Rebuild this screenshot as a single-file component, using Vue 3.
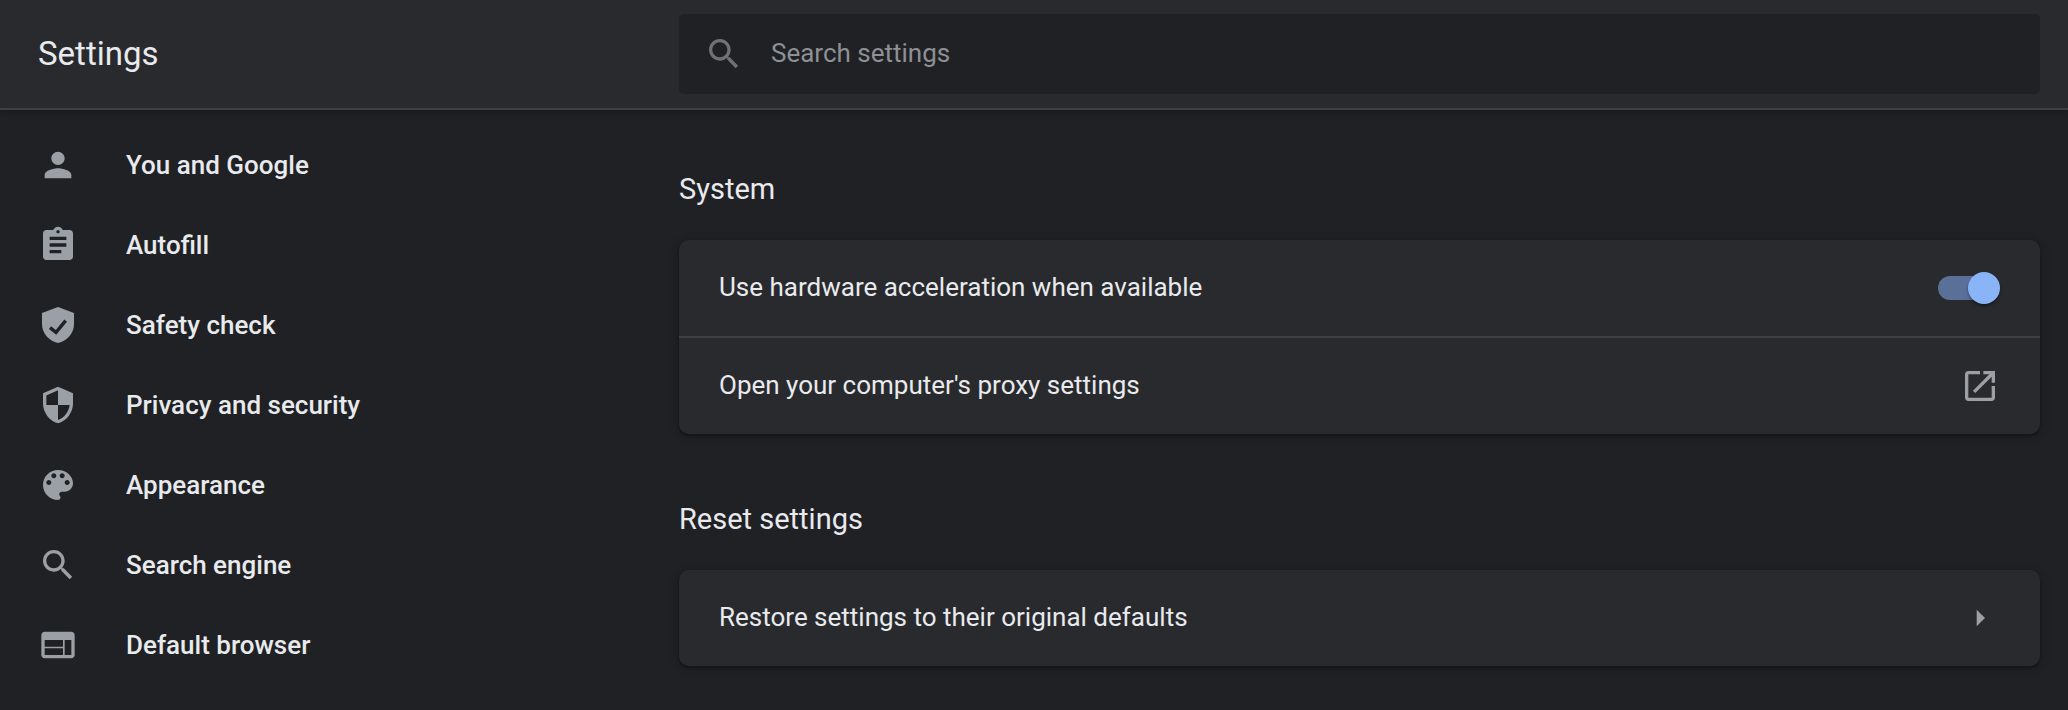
<script setup>
const search = 'M15.5 14h-.79l-.28-.27C15.41 12.59 16 11.11 16 9.5 16 5.91 13.09 3 9.5 3S3 5.91 3 9.5 5.91 16 9.5 16c1.61 0 3.09-.59 4.23-1.57l.27.28v.79l5 4.99L20.49 19l-4.99-5zm-6 0C7.01 14 5 11.99 5 9.5S7.01 5 9.5 5 14 7.01 14 9.5 11.99 14 9.5 14z'
const nav = [
  { label: 'You and Google', d: 'M12 12c2.21 0 4-1.79 4-4s-1.79-4-4-4-4 1.79-4 4 1.79 4 4 4zm0 2c-2.67 0-8 1.34-8 4v2h16v-2c0-2.66-5.33-4-8-4z' },
  { label: 'Autofill', d: 'M19 3h-4.18C14.4 1.84 13.3 1 12 1c-1.3 0-2.4.84-2.82 2H5c-1.1 0-2 .9-2 2v14c0 1.1.9 2 2 2h14c1.1 0 2-.9 2-2V5c0-1.1-.9-2-2-2zm-7 0c.55 0 1 .45 1 1s-.45 1-1 1-1-.45-1-1 .45-1 1-1zm2 14H7v-2h7v2zm3-4H7v-2h10v2zm0-4H7V7h10v2z' },
  { label: 'Safety check', d: 'M12 1.2 2.4 4.8v6.6c0 5.6 4.1 10.2 9.6 11.4 5.5-1.2 9.6-5.8 9.6-11.4V4.8L12 1.2z', check: true },
  { label: 'Privacy and security', d: 'M12 1L3 5v6c0 5.55 3.84 10.74 9 12 5.16-1.26 9-6.45 9-12V5l-9-4zm0 10.99h7c-.53 4.12-3.28 7.79-7 8.94V12H5V6.3l7-3.11v8.8z' },
  { label: 'Appearance', d: 'M12 3c-4.97 0-9 4.03-9 9s4.03 9 9 9c.83 0 1.5-.67 1.5-1.5 0-.39-.15-.74-.39-1.01-.23-.26-.38-.61-.38-.99 0-.83.67-1.5 1.5-1.5H16c2.76 0 5-2.24 5-5 0-4.42-4.03-8-9-8zm-5.5 9c-.83 0-1.5-.67-1.5-1.5S5.67 9 6.5 9 8 9.67 8 10.5 7.33 12 6.5 12zm3-4C8.67 8 8 7.33 8 6.5S8.67 5 9.5 5s1.5.67 1.5 1.5S10.33 8 9.5 8zm5 0c-.83 0-1.5-.67-1.5-1.5S13.67 5 14.5 5s1.5.67 1.5 1.5S15.33 8 14.5 8zm3 4c-.83 0-1.5-.67-1.5-1.5S16.67 9 17.5 9s1.5.67 1.5 1.5-.67 1.5-1.5 1.5z' },
  { label: 'Search engine', d: search },
  { label: 'Default browser', d: 'M20 4H4c-1.1 0-1.99.9-1.99 2L2 18c0 1.1.9 2 2 2h16c1.1 0 2-.9 2-2V6c0-1.1-.9-2-2-2zm-5 14H4v-4h11v4zm0-5H4V9h11v4zm5 5h-4V9h4v9z' }
]
</script>

<template>
  <div class="page">
    <header class="top">
      <h1 class="title">Settings</h1>
      <div class="search">
        <svg class="search-icon" viewBox="0 0 24 24"><path :d="search" /></svg>
        <span class="placeholder">Search settings</span>
      </div>
    </header>
    <div class="body">
      <nav class="nav">
        <a v-for="item in nav" :key="item.label" class="nav-item">
          <svg class="nav-icon" viewBox="0 0 24 24">
            <path :d="item.d" />
            <polyline v-if="item.check" class="check" points="7.2,13.6 10.8,16.4 16.6,9.4" />
          </svg>
          <span>{{ item.label }}</span>
        </a>
      </nav>
      <main class="main">
        <h2 class="heading first">System</h2>
        <section class="card">
          <div class="row">
            <span class="label">Use hardware acceleration when available</span>
            <span class="toggle"><span class="thumb"></span></span>
          </div>
          <div class="row divided">
            <span class="label">Open your computer's proxy settings</span>
            <svg class="row-icon" viewBox="0 0 24 24"><path d="M19 19H5V5h7V3H5c-1.11 0-2 .9-2 2v14c0 1.1.89 2 2 2h14c1.1 0 2-.9 2-2v-7h-2v7zM14 3v2h3.59l-9.83 9.83 1.41 1.41L19 6.41V10h2V3h-7z" /></svg>
          </div>
        </section>
        <h2 class="heading">Reset settings</h2>
        <section class="card">
          <div class="row">
            <span class="label">Restore settings to their original defaults</span>
            <svg class="row-icon" viewBox="0 0 24 24"><path d="M10 7l5 5-5 5z" /></svg>
          </div>
        </section>
      </main>
    </div>
  </div>
</template>

<style>
html, body { margin: 0; background: #202124; overflow: hidden; }
</style>

<style scoped>
.page {
  width: 2068px;
  height: 710px;
  overflow: hidden;
  background: #202124;
  color: #e8eaed;
  font-family: Roboto, "Liberation Sans", sans-serif;
  font-size: 26px;
}
.top {
  position: relative;
  z-index: 1;
  box-sizing: border-box;
  height: 110px;
  display: grid;
  grid-template-columns: 679px 1fr;
  align-items: start;
  background: #292a2d;
  border-bottom: 2px solid #3f4043;
  box-shadow: 0 3px 6px rgba(0, 0, 0, 0.22);
}
.title {
  margin: 0;
  padding-left: 38px;
  font-size: 33px;
  font-weight: 400;
  line-height: 108px;
}
.search {
  display: flex;
  align-items: center;
  height: 80px;
  margin: 14px 28px 0 0;
  background: #202124;
  border-radius: 5px;
}
.search-icon {
  width: 40px;
  height: 40px;
  margin-left: 25px;
  fill: #6e7276;
}
.placeholder {
  margin: 0 0 2px 27px;
  color: #8d9094;
}
.body {
  display: grid;
  grid-template-columns: 679px 1fr;
}
.nav {
  padding-top: 15px;
  display: flex;
  flex-direction: column;
}
.nav-item {
  height: 80px;
  display: flex;
  align-items: center;
  padding-left: 38px;
  font-weight: 500;
}
.nav-icon {
  width: 40px;
  height: 40px;
  margin-right: 48px;
  fill: #9aa0a6;
  flex: none;
}
.check {
  fill: none;
  stroke: #202124;
  stroke-width: 2;
}
.main {
  padding-right: 28px;
}
.heading {
  margin: 0;
  font-size: 29px;
  font-weight: 400;
  line-height: 24px;
  padding: 73px 0 39px;
}
.heading.first {
  padding: 67px 0 39px;
}
.card {
  background: #292a2d;
  border-radius: 10px;
  box-shadow: 0 2px 3px rgba(0, 0, 0, 0.3), 0 2px 8px 2px rgba(0, 0, 0, 0.15);
}
.row {
  box-sizing: border-box;
  height: 96px;
  display: flex;
  align-items: center;
  justify-content: space-between;
  padding: 0 40px;
}
.label {
  margin-bottom: 2px;
}
.divided {
  height: 98px;
  border-top: 2px solid #3f4043;
}
.row-icon {
  width: 40px;
  height: 40px;
  fill: #9aa0a6;
}
.toggle {
  position: relative;
  width: 52px;
  height: 24px;
  margin-right: 10px;
  border-radius: 12px;
  background: #5b7099;
}
.thumb {
  position: absolute;
  right: -10px;
  top: -4px;
  width: 32px;
  height: 32px;
  border-radius: 50%;
  background: #8ab4f8;
  box-shadow: 0 2px 3px rgba(0, 0, 0, 0.4);
}
</style>
